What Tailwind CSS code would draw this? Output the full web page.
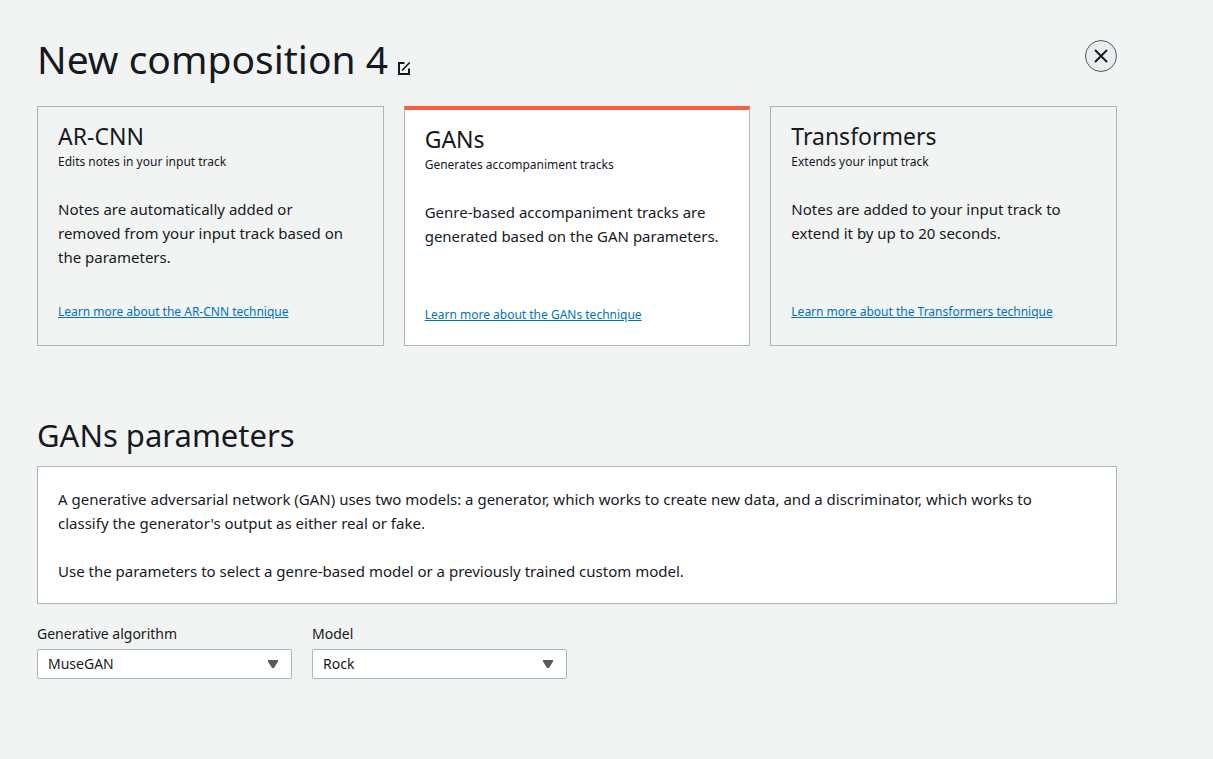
<!DOCTYPE html>
<html lang="en">
<head>
<meta charset="utf-8">
<meta name="viewport" content="width=device-width, initial-scale=1">
<title>New composition 4</title>
<script src="https://cdn.jsdelivr.net/npm/@tailwindcss/browser@4"></script>
</head>
<body class="min-h-screen bg-[#f2f3f3] font-['Noto_Sans',sans-serif] text-[#16191f]">
<main class="pt-8 pr-24 pl-[37px]">
  <header class="flex items-start justify-between">
    <div class="flex items-end gap-2">
      <h1 class="text-[39px] leading-[54px]">New composition 4</h1>
      <button type="button" aria-label="Rename composition" class="mb-2.5">
        <svg class="size-4" viewBox="0 0 16 16" fill="none" stroke="currentColor" stroke-width="2"><path d="M8.500 3H3v11h10V8.500"/><path d="M6 10.500l7.700-8" stroke-width="1.700"/></svg>
      </button>
    </div>
    <button type="button" aria-label="Close" class="mt-2 flex size-8 items-center justify-center rounded-full border border-[#545b64] bg-[#eaeded]">
      <svg class="size-4" viewBox="0 0 16 16" fill="none" stroke="currentColor" stroke-width="1.900" stroke-linecap="round"><path d="M2.500 2.500l11 11M13.500 2.500l-11 11"/></svg>
    </button>
  </header>

  <section class="mt-5 grid grid-cols-3 gap-5">
    <article class="h-60 border border-[#aab7b8] px-5 pt-3">
      <h2 class="text-[23px] leading-[35px]">AR-CNN</h2>
      <p class="text-xs leading-4">Edits notes in your input track</p>
      <p class="mt-[27px] mr-2 min-h-24 text-[15px] leading-6">Notes are automatically added or removed from your input track based on the parameters.</p>
      <a href="#ar-cnn" class="mt-[11px] inline-block text-xs leading-4 text-[#0073bb] underline">Learn more about the AR-CNN technique</a>
    </article>
    <article class="h-60 border border-t-4 border-[#aab7b8] border-t-[#ff5d42] bg-white px-5 pt-3">
      <h2 class="text-[23px] leading-[35px]">GANs</h2>
      <p class="text-xs leading-4">Generates accompaniment tracks</p>
      <p class="mt-[27px] mr-2 min-h-24 text-[15px] leading-6">Genre-based accompaniment tracks are generated based on the GAN parameters.</p>
      <a href="#gans" class="mt-[11px] inline-block text-xs leading-4 text-[#0073bb] underline">Learn more about the GANs technique</a>
    </article>
    <article class="h-60 border border-[#aab7b8] px-5 pt-3">
      <h2 class="text-[23px] leading-[35px]">Transformers</h2>
      <p class="text-xs leading-4">Extends your input track</p>
      <p class="mt-[27px] mr-2 min-h-24 text-[15px] leading-6">Notes are added to your input track to extend it by up to 20 seconds.</p>
      <a href="#transformers" class="mt-[11px] inline-block text-xs leading-4 text-[#0073bb] underline">Learn more about the Transformers technique</a>
    </article>
  </section>

  <section class="mt-[68px]">
    <h2 class="text-[31px] leading-[42px]">GANs parameters</h2>
    <div class="mt-2.5 border border-[#aab7b8] bg-white py-5 pr-10 pl-5 text-[15px] leading-6">
      <p>A generative adversarial network (GAN) uses two models: a generator, which works to create new data, and a discriminator, which works to classify the generator's output as either real or fake.</p>
      <p class="mt-6">Use the parameters to select a genre-based model or a previously trained custom model.</p>
    </div>
    <form class="mt-5 flex gap-5">
      <div class="flex w-[255px] flex-col">
        <label for="algorithm" class="text-sm leading-5">Generative algorithm</label>
        <div class="relative mt-[5px]">
          <select id="algorithm" class="h-[30px] w-full appearance-none rounded-xs border border-[#aab7b8] bg-white px-2.5 text-sm"><option>MuseGAN</option></select>
          <svg class="pointer-events-none absolute top-2.5 right-3.5 size-2.5" viewBox="0 0 10 10" fill="#545b64"><path d="M0 1h10v1.500L6 9H4L0 2.500z"/></svg>
        </div>
      </div>
      <div class="flex w-[255px] flex-col">
        <label for="model" class="text-sm leading-5">Model</label>
        <div class="relative mt-[5px]">
          <select id="model" class="h-[30px] w-full appearance-none rounded-xs border border-[#aab7b8] bg-white px-2.5 text-sm"><option>Rock</option></select>
          <svg class="pointer-events-none absolute top-2.5 right-3.5 size-2.5" viewBox="0 0 10 10" fill="#545b64"><path d="M0 1h10v1.500L6 9H4L0 2.500z"/></svg>
        </div>
      </div>
    </form>
  </section>
</main>
</body>
</html>
